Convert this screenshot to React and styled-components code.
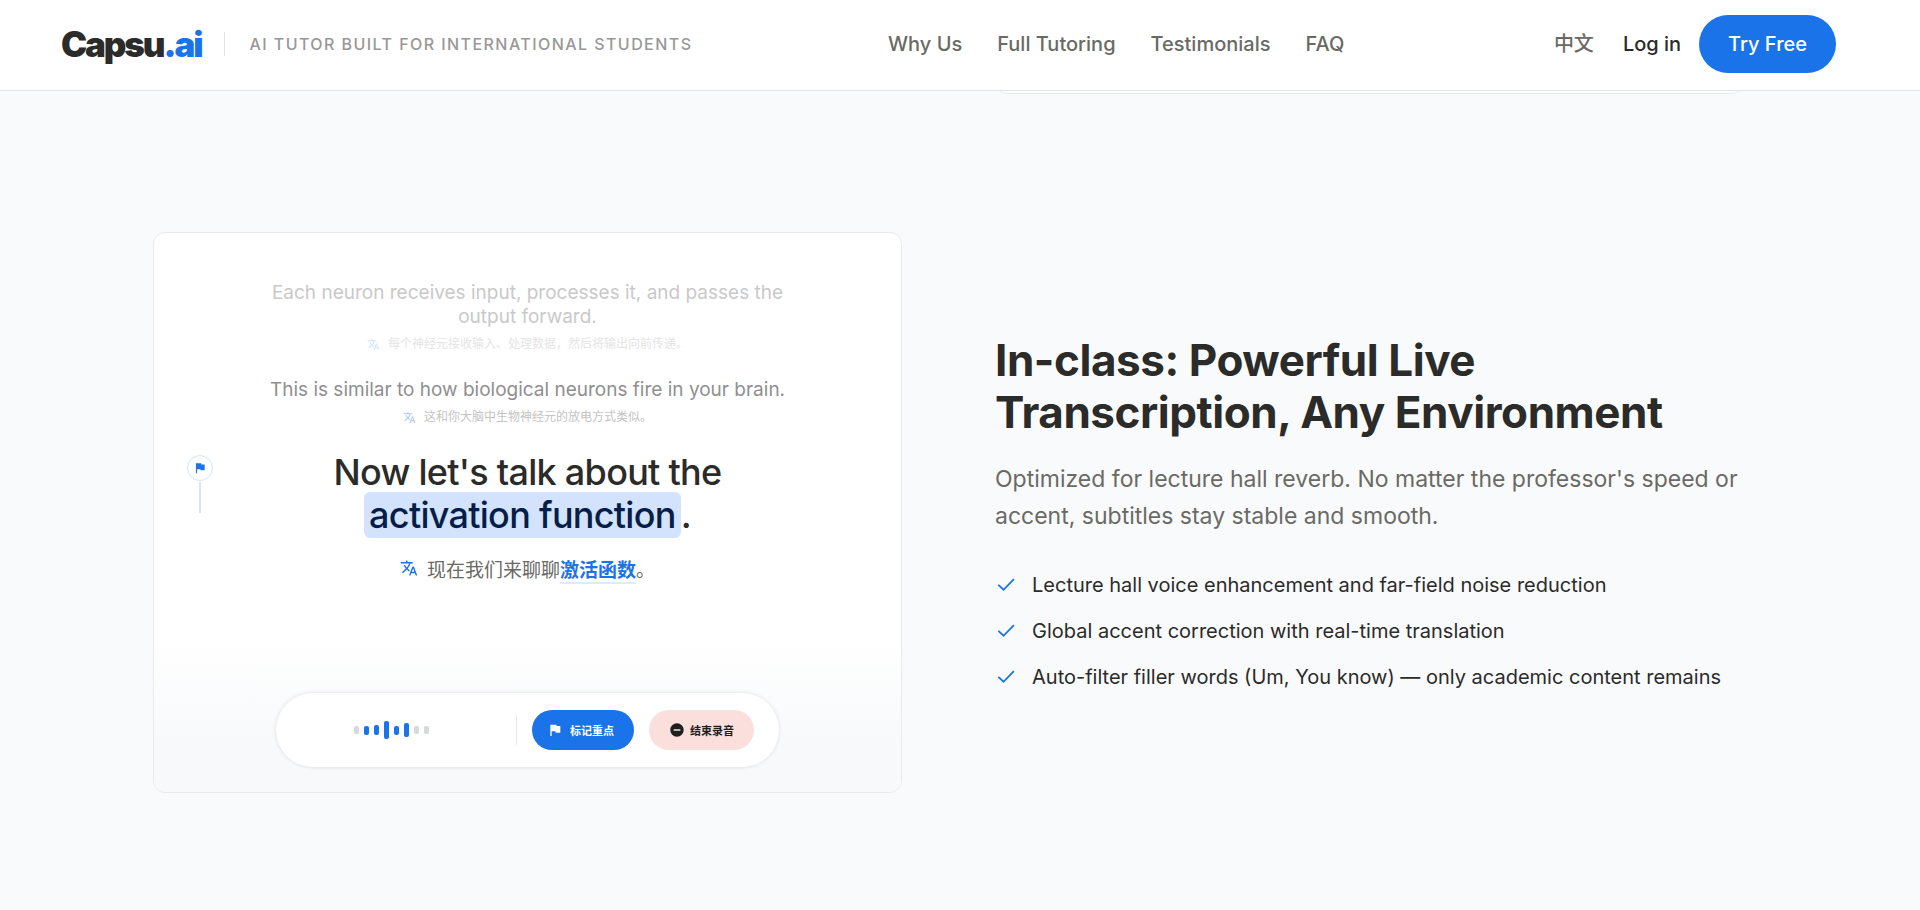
import React from "react";
import styled, { createGlobalStyle } from "styled-components";
import { MdFlag, MdRemoveCircle, MdTranslate } from "react-icons/md";

const GlobalStyle = createGlobalStyle`
  *, *::before, *::after { box-sizing: border-box; }
  body {
    margin: 0;
    background: #f9fafc;
    color: #2b2b29;
    font-family: Inter, "Noto Sans CJK SC", sans-serif;
    -webkit-font-smoothing: antialiased;
  }
  h2, p, ul { margin: 0; padding: 0; }
  a { color: inherit; text-decoration: none; }
  button { font-family: inherit; border: 0; cursor: pointer; }
`;

const Header = styled.header`
  position: sticky;
  top: 0;
  z-index: 10;
  display: flex;
  justify-content: space-between;
  align-items: center;
  height: 91px;
  padding: 0 84px 3px 61px;
  background: #fff;
  border-bottom: 1px solid #e3e3e3;
  white-space: nowrap;
`;

const Brand = styled.div`
  display: flex;
  align-items: center;
`;

const Logo = styled.a`
  font-size: 35px;
  line-height: 40px;
  font-weight: 900;
  letter-spacing: -0.06em;
  span { color: #1a73e8; }
`;

const Tagline = styled.span`
  margin-left: 23px;
  padding-left: 24px;
  border-left: 1px solid #e3e3e3;
  font-size: 16px;
  line-height: 24px;
  font-weight: 500;
  letter-spacing: 0.09em;
  text-transform: uppercase;
  color: #989898;
`;

const Nav = styled.nav`
  display: flex;
  gap: 35px;
  font-size: 20px;
  line-height: 28px;
  font-weight: 500;
  color: #6a6a65;
`;

const Actions = styled.div`
  display: flex;
  align-items: center;
  font-size: 20px;
  line-height: 28px;
  font-weight: 500;
`;

const LanguageButton = styled.button`
  margin-right: 15px;
  padding: 0 14px;
  background: none;
  font-size: 20px;
  line-height: 28px;
  font-weight: 500;
  color: #6a6a65;
`;

const TryButton = styled.button`
  height: 58px;
  margin-left: 18px;
  padding: 0 29px;
  border-radius: 29px;
  background: #1a73e8;
  color: #fff;
  font-size: 20px;
  font-weight: 500;
`;

const Main = styled.main`
  padding: 0 176px 0 153px;
`;

const Split = styled.section`
  display: grid;
  grid-template-columns: 1fr 1fr;
  column-gap: 93px;
  align-items: center;
`;

const PreviousFeature = styled(Split)`
  height: 3px;
  overflow: hidden;
  align-content: end;
`;

const PreviousPanel = styled.div`
  grid-column: 2;
  height: 40px;
  border: 1px solid #e9eaec;
  border-radius: 12px;
  background: #fff;
`;

const Feature = styled(Split)`
  padding: 138px 0 117px;
`;

const Panel = styled.div`
  border: 1px solid #e9eaec;
  border-radius: 12px;
  background: #fff;
  overflow: hidden;
`;

const Transcript = styled.div`
  display: flex;
  flex-direction: column;
  gap: 25px;
  padding: 48px 0 52px;
`;

const Line = styled.div`
  display: grid;
  grid-template-columns: 110px 1fr 110px;
  text-align: center;
`;

const Spoken = styled.p`
  grid-column: 2;
  font-size: 19px;
  line-height: 24px;
  color: ${(p) => (p.$faded ? "#c9c9c9" : "#8f8f8f")};
`;

const Translation = styled.p`
  grid-column: 2;
  display: flex;
  justify-content: center;
  align-items: center;
  gap: 8px;
  margin-top: 6px;
  font-size: 12px;
  line-height: 18px;
  color: ${(p) => (p.$faded ? "#e4e4e4" : "#c4c4c4")};
  svg { color: ${(p) => (p.$faded ? "#d4e3fb" : "#a9c9f8")}; }
`;

const Marker = styled.div`
  display: flex;
  flex-direction: column;
  align-items: center;
  justify-self: start;
  margin: 4px 0 0 33px;
`;

const MarkerDot = styled.span`
  display: grid;
  place-items: center;
  width: 26px;
  height: 26px;
  border: 1px solid #d3e3fd;
  border-radius: 50%;
  color: #1a73e8;
`;

const MarkerStem = styled.span`
  width: 2px;
  height: 31px;
  margin-top: 1px;
  background: #d3e3fd;
`;

const CurrentSpoken = styled.p`
  font-size: 36px;
  line-height: 43px;
  font-weight: 500;
  letter-spacing: -0.02em;
`;

const Highlight = styled.mark`
  padding: 1px 5px;
  border-radius: 6px;
  background: #d3e3fd;
  color: #041e49;
`;

const CurrentTranslation = styled.p`
  grid-column: 2;
  display: flex;
  justify-content: center;
  gap: 9px;
  margin-top: 20px;
  font-size: 19px;
  line-height: 28px;
  color: #6a6a65;
  svg { margin-top: 2px; color: #1a73e8; }
`;

const Term = styled.strong`
  display: inline-block;
  border-bottom: 2px solid #e0eafd;
  line-height: 22px;
  color: #1a73e8;
`;

const PanelFooter = styled.div`
  padding: 56px 122px 25px;
  background: linear-gradient(#fff, #f8f9fb 70%);
`;

const Recorder = styled.div`
  display: flex;
  align-items: center;
  gap: 15px;
  height: 74px;
  padding: 0 25px 0 6px;
  border-radius: 37px;
  background: #fff;
  box-shadow: 0 0 4px rgba(0, 0, 0, 0.12);
`;

const Wave = styled.div`
  flex: 1;
  display: flex;
  align-items: center;
  justify-content: center;
  gap: 5px;
`;

const Bar = styled.span`
  width: 5px;
  height: ${(p) => p.$height}px;
  border-radius: 2px;
  background: ${(p) => (p.$idle ? "#d8d9db" : "#1a73e8")};
`;

const Divider = styled.span`
  width: 1px;
  height: 30px;
  background: #e8e8e8;
`;

const PillButton = styled.button`
  display: flex;
  align-items: center;
  gap: ${(p) => (p.$danger ? 5 : 7)}px;
  height: 40px;
  padding: 0 ${(p) => (p.$danger ? "20px" : "20px 0 15px")};
  border-radius: 20px;
  background: ${(p) => (p.$danger ? "#fadfdc" : "#1a73e8")};
  color: ${(p) => (p.$danger ? "#1f1f1f" : "#fff")};
  font-size: 11px;
  font-weight: 600;
  white-space: nowrap;
`;

const Copy = styled.div``;

const Title = styled.h2`
  font-size: 44px;
  line-height: 52px;
  font-weight: 700;
  letter-spacing: -0.01em;
`;

const Lead = styled.p`
  margin-top: 23px;
  font-size: 23px;
  line-height: 37px;
  color: #6a6a65;
`;

const Benefits = styled.ul`
  display: grid;
  gap: 16px;
  margin-top: 35px;
  list-style: none;
  font-size: 20px;
  line-height: 30px;
`;

const Benefit = styled.li`
  display: flex;
  align-items: center;
  gap: 14px;
  svg { flex: none; }
`;

const Check = () => (
  <svg width="23" height="23" viewBox="0 0 24 24" fill="none" stroke="#1a73e8" strokeWidth="1.9" aria-hidden="true">
    <path d="M3.5 12.4 8.9 17.5 19.7 6.4" />
  </svg>
);

const BARS = [
  { height: 8, idle: true },
  { height: 9 },
  { height: 10 },
  { height: 18 },
  { height: 9 },
  { height: 14 },
  { height: 8, idle: true },
  { height: 8, idle: true },
];

const BENEFITS = [
  "Lecture hall voice enhancement and far-field noise reduction",
  "Global accent correction with real-time translation",
  "Auto-filter filler words (Um, You know) — only academic content remains",
];

export default function App() {
  return (
    <>
      <GlobalStyle />
      <Header>
        <Brand>
          <Logo href="#">Capsu<span>.ai</span></Logo>
          <Tagline>AI Tutor built for international students</Tagline>
        </Brand>
        <Nav>
          <a href="#why">Why Us</a>
          <a href="#tutoring">Full Tutoring</a>
          <a href="#testimonials">Testimonials</a>
          <a href="#faq">FAQ</a>
        </Nav>
        <Actions>
          <LanguageButton type="button">中文</LanguageButton>
          <a href="#login">Log in</a>
          <TryButton type="button">Try Free</TryButton>
        </Actions>
      </Header>
      <Main>
        <PreviousFeature>
          <PreviousPanel />
        </PreviousFeature>
        <Feature>
          <Panel>
            <Transcript>
              <Line>
                <Spoken $faded>Each neuron receives input, processes it, and passes the output forward.</Spoken>
                <Translation $faded lang="zh">
                  <MdTranslate size={13} />
                  每个神经元接收输入、处理数据，然后将输出向前传递。
                </Translation>
              </Line>
              <Line>
                <Spoken>This is similar to how biological neurons fire in your brain.</Spoken>
                <Translation lang="zh">
                  <MdTranslate size={13} />
                  这和你大脑中生物神经元的放电方式类似。
                </Translation>
              </Line>
              <Line>
                <Marker>
                  <MarkerDot><MdFlag size={14} /></MarkerDot>
                  <MarkerStem />
                </Marker>
                <CurrentSpoken>
                  Now let's talk about the <Highlight>activation function</Highlight>.
                </CurrentSpoken>
                <CurrentTranslation lang="zh">
                  <MdTranslate size={18} />
                  <span>现在我们来聊聊<Term>激活函数</Term>。</span>
                </CurrentTranslation>
              </Line>
            </Transcript>
            <PanelFooter>
              <Recorder>
                <Wave>
                  {BARS.map((bar, i) => (
                    <Bar key={i} $height={bar.height} $idle={bar.idle} />
                  ))}
                </Wave>
                <Divider />
                <PillButton type="button"><MdFlag size={16} />标记重点</PillButton>
                <PillButton type="button" $danger><MdRemoveCircle size={16} />结束录音</PillButton>
              </Recorder>
            </PanelFooter>
          </Panel>
          <Copy>
            <Title>In-class: Powerful Live Transcription, Any Environment</Title>
            <Lead>
              Optimized for lecture hall reverb. No matter the professor's speed or accent, subtitles stay stable
              and smooth.
            </Lead>
            <Benefits>
              {BENEFITS.map((text) => (
                <Benefit key={text}><Check />{text}</Benefit>
              ))}
            </Benefits>
          </Copy>
        </Feature>
      </Main>
    </>
  );
}
